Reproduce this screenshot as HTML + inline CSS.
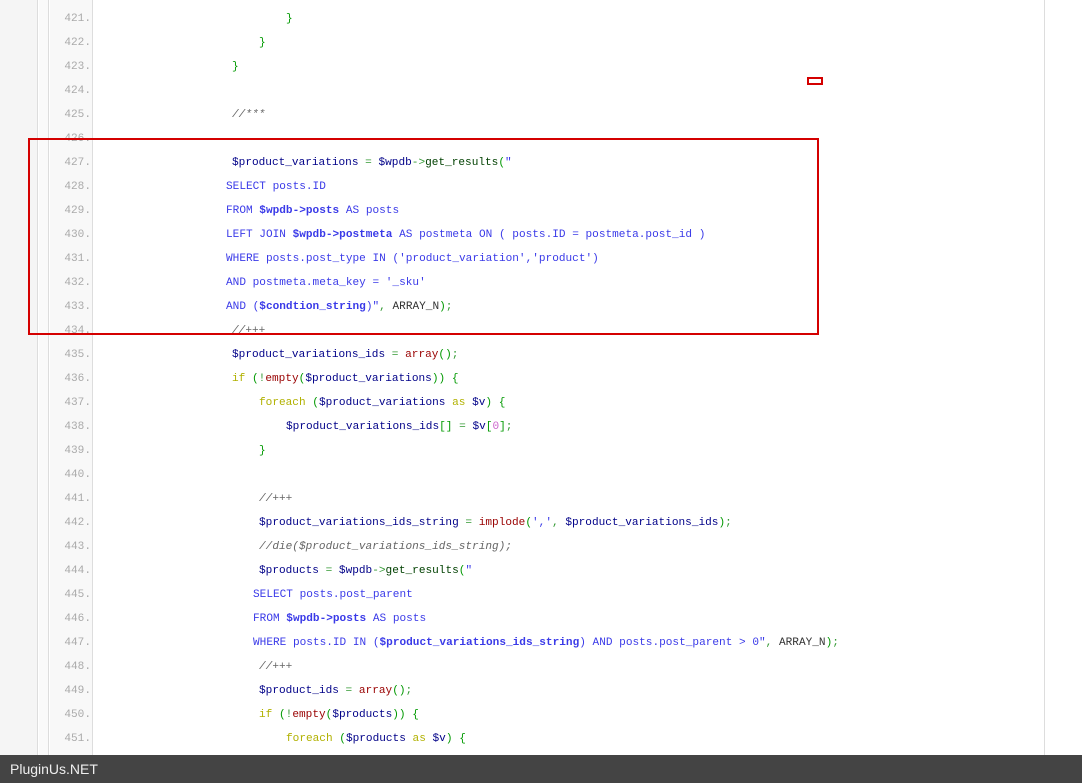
<!DOCTYPE html>
<html><head><meta charset="utf-8"><style>
*{margin:0;padding:0;box-sizing:border-box}
html,body{width:1082px;height:783px;overflow:hidden;background:#fff}
.lg{position:absolute;left:0;top:0;width:38px;height:783px;background:#f5f5f5;border-right:1px solid #ddd}
.lg2{position:absolute;left:39px;top:0;width:10px;height:783px;background:#fafafa;border-right:1px solid #ddd}
.gut{position:absolute;left:50px;top:0;width:43px;height:783px;background:#f8f8f8;border-right:1px solid #ddd}
.rb{position:absolute;left:1044px;top:0;width:1px;height:783px;background:#ddd}
.l{position:absolute;height:24px;font:11.1px "Liberation Mono",monospace;line-height:24px;white-space:pre;color:#000088;margin-top:1px}
.n{position:absolute;left:50px;width:41px;text-align:right;height:24px;font:11.1px "Liberation Mono",monospace;line-height:24px;color:#aaa;margin-top:1px}
.k{color:#b1b100}.p{color:#009900}.o{color:#339933}.f{color:#990000}.s{color:#3a3ae8}.b{color:#3a3ae8;font-weight:bold}.c{color:#666;font-style:italic}.g{color:#004000}.d{color:#cc66cc}.a{color:#333}
.box{position:absolute;left:28px;top:138px;width:791px;height:197px;border:2px solid #d40000}
.sb{position:absolute;left:807px;top:77px;width:16px;height:8px;border:2px solid #d40000}
.ft{position:absolute;left:0;top:755px;width:1082px;height:28px;background:#444;color:#eee;font:14px "Liberation Sans",sans-serif;line-height:28px;padding-left:10px}
</style></head><body>
<div class="lg"></div><div class="lg2"></div><div class="gut"></div><div class="rb"></div>
<div class="n" style="top:6px">421.</div><div class="l" style="top:6px;left:286px"><span class="p">}</span></div>
<div class="n" style="top:30px">422.</div><div class="l" style="top:30px;left:259px"><span class="p">}</span></div>
<div class="n" style="top:54px">423.</div><div class="l" style="top:54px;left:232px"><span class="p">}</span></div>
<div class="n" style="top:78px">424.</div>
<div class="n" style="top:102px">425.</div><div class="l" style="top:102px;left:232px"><span class="c">//***</span></div>
<div class="n" style="top:126px">426.</div>
<div class="n" style="top:150px">427.</div><div class="l" style="top:150px;left:232px">$product_variations <span class="o">=</span> $wpdb<span class="o">-&gt;</span><span class="g">get_results</span><span class="p">(</span><span class="s">"</span></div>
<div class="n" style="top:174px">428.</div><div class="l s" style="top:174px;left:226px">SELECT posts.ID</div>
<div class="n" style="top:198px">429.</div><div class="l s" style="top:198px;left:226px">FROM <b>$wpdb-&gt;posts</b> AS posts</div>
<div class="n" style="top:222px">430.</div><div class="l s" style="top:222px;left:226px">LEFT JOIN <b>$wpdb-&gt;postmeta</b> AS postmeta ON ( posts.ID = postmeta.post_id )</div>
<div class="n" style="top:246px">431.</div><div class="l s" style="top:246px;left:226px">WHERE posts.post_type IN ('product_variation','product')</div>
<div class="n" style="top:270px">432.</div><div class="l s" style="top:270px;left:226px">AND postmeta.meta_key = '_sku'</div>
<div class="n" style="top:294px">433.</div><div class="l" style="top:294px;left:226px"><span class="s">AND (<b>$condtion_string</b>)"</span><span class="o">,</span> <span class="a">ARRAY_N</span><span class="p">)</span><span class="o">;</span></div>
<div class="n" style="top:318px">434.</div><div class="l" style="top:318px;left:232px"><span class="c">//+++</span></div>
<div class="n" style="top:342px">435.</div><div class="l" style="top:342px;left:232px">$product_variations_ids <span class="o">=</span> <span class="f">array</span><span class="p">()</span><span class="o">;</span></div>
<div class="n" style="top:366px">436.</div><div class="l" style="top:366px;left:232px"><span class="k">if</span> <span class="p">(</span><span class="o">!</span><span class="f">empty</span><span class="p">(</span>$product_variations<span class="p">))</span> <span class="p">{</span></div>
<div class="n" style="top:390px">437.</div><div class="l" style="top:390px;left:259px"><span class="k">foreach</span> <span class="p">(</span>$product_variations <span class="k">as</span> $v<span class="p">)</span> <span class="p">{</span></div>
<div class="n" style="top:414px">438.</div><div class="l" style="top:414px;left:286px">$product_variations_ids<span class="p">[]</span> <span class="o">=</span> $v<span class="p">[</span><span class="d">0</span><span class="p">]</span><span class="o">;</span></div>
<div class="n" style="top:438px">439.</div><div class="l" style="top:438px;left:259px"><span class="p">}</span></div>
<div class="n" style="top:462px">440.</div>
<div class="n" style="top:486px">441.</div><div class="l" style="top:486px;left:259px"><span class="c">//+++</span></div>
<div class="n" style="top:510px">442.</div><div class="l" style="top:510px;left:259px">$product_variations_ids_string <span class="o">=</span> <span class="f">implode</span><span class="p">(</span><span class="s">','</span><span class="o">,</span> $product_variations_ids<span class="p">)</span><span class="o">;</span></div>
<div class="n" style="top:534px">443.</div><div class="l" style="top:534px;left:259px"><span class="c">//die($product_variations_ids_string);</span></div>
<div class="n" style="top:558px">444.</div><div class="l" style="top:558px;left:259px">$products <span class="o">=</span> $wpdb<span class="o">-&gt;</span><span class="g">get_results</span><span class="p">(</span><span class="s">"</span></div>
<div class="n" style="top:582px">445.</div><div class="l s" style="top:582px;left:253px">SELECT posts.post_parent</div>
<div class="n" style="top:606px">446.</div><div class="l s" style="top:606px;left:253px">FROM <b>$wpdb-&gt;posts</b> AS posts</div>
<div class="n" style="top:630px">447.</div><div class="l" style="top:630px;left:253px"><span class="s">WHERE posts.ID IN (<b>$product_variations_ids_string</b>) AND posts.post_parent &gt; 0"</span><span class="o">,</span> <span class="a">ARRAY_N</span><span class="p">)</span><span class="o">;</span></div>
<div class="n" style="top:654px">448.</div><div class="l" style="top:654px;left:259px"><span class="c">//+++</span></div>
<div class="n" style="top:678px">449.</div><div class="l" style="top:678px;left:259px">$product_ids <span class="o">=</span> <span class="f">array</span><span class="p">()</span><span class="o">;</span></div>
<div class="n" style="top:702px">450.</div><div class="l" style="top:702px;left:259px"><span class="k">if</span> <span class="p">(</span><span class="o">!</span><span class="f">empty</span><span class="p">(</span>$products<span class="p">))</span> <span class="p">{</span></div>
<div class="n" style="top:726px">451.</div><div class="l" style="top:726px;left:286px"><span class="k">foreach</span> <span class="p">(</span>$products <span class="k">as</span> $v<span class="p">)</span> <span class="p">{</span></div>
<div class="box"></div><div class="sb"></div>
<div class="ft">PluginUs.NET</div>
</body></html>
